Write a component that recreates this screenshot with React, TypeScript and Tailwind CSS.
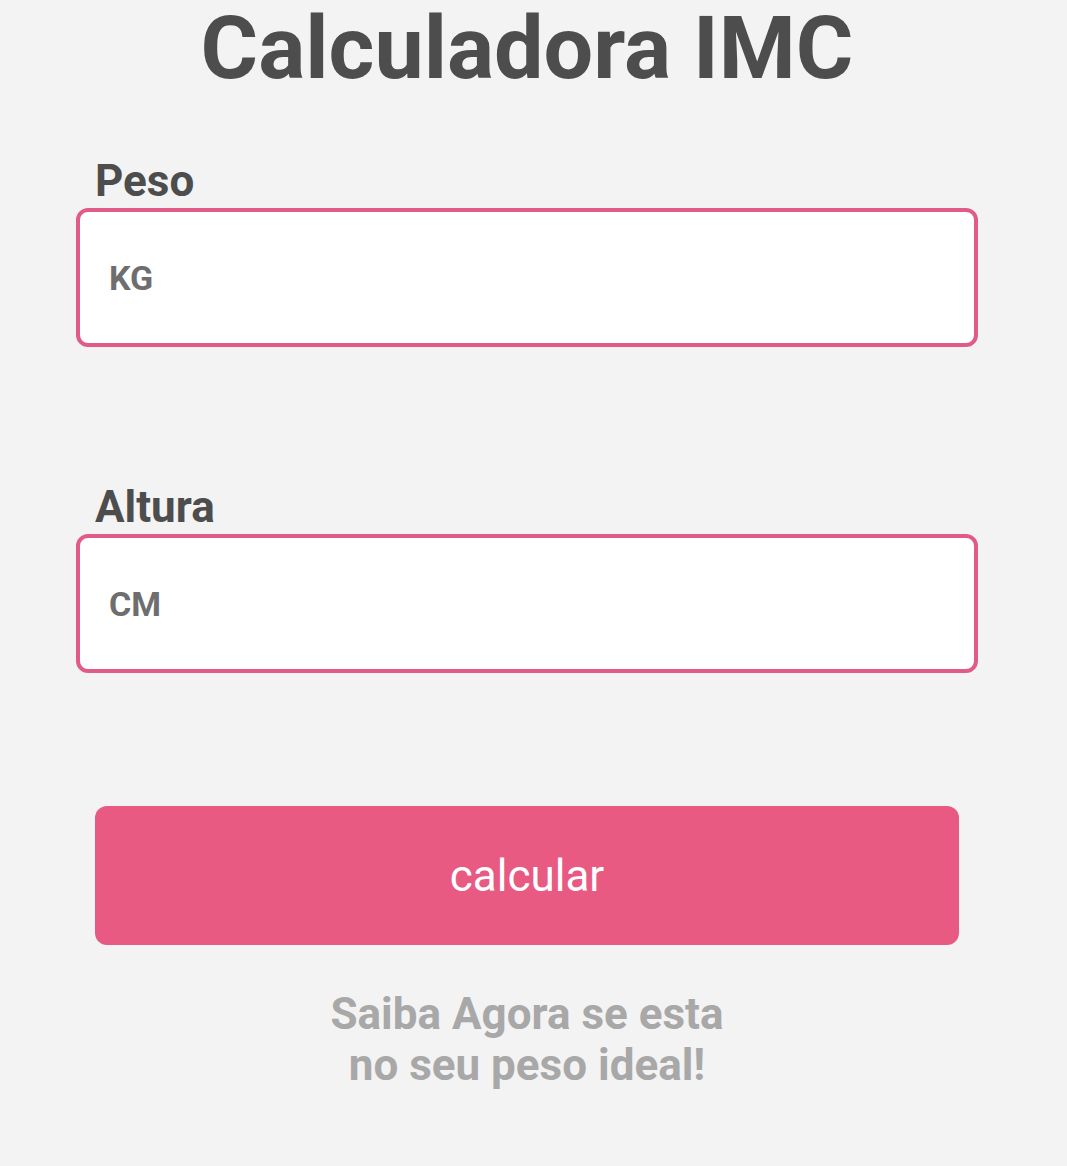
import React from 'react';

const Field = ({ label, placeholder }: { label: string; placeholder: string }) => (
  <div className="flex flex-col">
    <label className="pl-[19px] text-[44px] font-bold leading-[50px] text-[#4d4d4d]">{label}</label>
    <input
      placeholder={placeholder}
      className="mt-[2px] h-[139px] w-full rounded-[12px] border-[4px] border-[#e05c86] bg-white pl-[29px] text-[34px] font-bold text-[#6b6b6b] outline-none placeholder:text-[#6e6e6e]"
    />
  </div>
);

const App: React.FC = () => {
  return (
    <div className="min-h-[1166px] bg-[#f3f3f3] font-['Roboto',sans-serif]">
      <div className="ml-[76px] w-[902px] flex flex-col">
        <h1 className="text-center text-[88px] font-bold leading-[96px] text-[#4d4d4d]">Calculadora IMC</h1>

        <div className="mt-[60px]">
          <Field label="Peso" placeholder="KG" />
        </div>
        <div className="mt-[135px]">
          <Field label="Altura" placeholder="CM" />
        </div>

        <div className="mt-[133px] px-[19px]">
          <button className="h-[139px] w-full rounded-[12px] bg-[#e85a82] text-[44px] font-normal text-white">
            calcular
          </button>
        </div>

        <p className="mt-[44px] text-center text-[44px] font-bold leading-[51px] text-[#a8a8a8]">
          Saiba Agora se esta
          <br />
          no seu peso ideal!
        </p>
      </div>
    </div>
  );
};

export default App;
